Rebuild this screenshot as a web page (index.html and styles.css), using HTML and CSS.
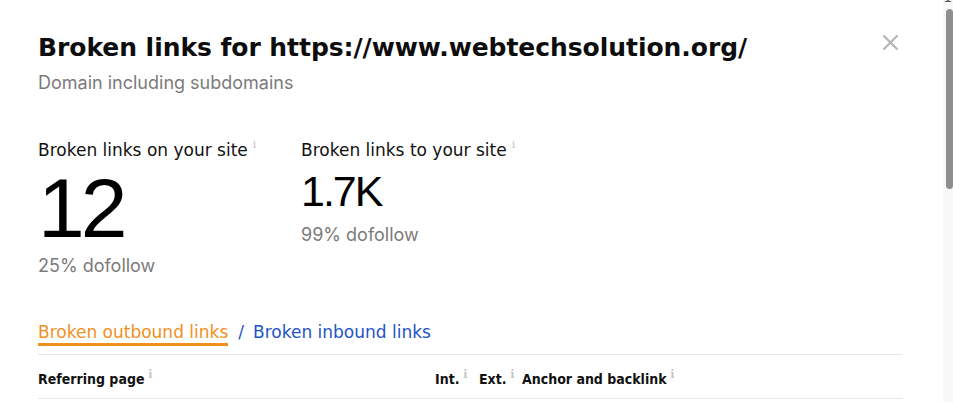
FILE: index.html
```html
<!DOCTYPE html>
<html lang="en">
<head>
<meta charset="utf-8">
<title>Broken links</title>
<link rel="stylesheet" href="styles.css">
</head>
<body>
<main class="panel">
  <header class="head">
    <div class="head-text">
      <h1 class="title">Broken links for https://www.webtechsolution.org/</h1>
      <p class="subtitle">Domain including subdomains</p>
    </div>
    <button class="close" aria-label="Close">
      <svg width="17" height="17" viewBox="0 0 17 17"><path d="M1.5 1.5 L15.5 15.5 M15.5 1.5 L1.5 15.5" stroke="#b4b4b4" stroke-width="2.2" fill="none"/></svg>
    </button>
  </header>

  <section class="stats">
    <div class="stat stat-on">
      <div class="stat-label">Broken links on your site<span class="info">i</span></div>
      <div class="stat-big">12</div>
      <div class="stat-sub stat-sub-big">25% dofollow</div>
    </div>
    <div class="stat stat-to">
      <div class="stat-label">Broken links to your site<span class="info">i</span></div>
      <div class="stat-mid">1.7K</div>
      <div class="stat-sub stat-sub-mid">99% dofollow</div>
    </div>
  </section>

  <nav class="tabs">
    <span class="tab tab-active">Broken outbound links</span><span class="tab-sep">/</span><span class="tab tab-link">Broken inbound links</span>
  </nav>

  <div class="table-head">
    <div class="th th-page">Referring page<span class="info">i</span></div>
    <div class="th th-int">Int.<span class="info">i</span></div>
    <div class="th th-ext">Ext.<span class="info">i</span></div>
    <div class="th th-anchor">Anchor and backlink<span class="info">i</span></div>
  </div>
</main>
<aside class="scrollbar">
  <div class="scroll-arrow"></div>
  <div class="scroll-thumb"></div>
</aside>
</body>
</html>
```

FILE: styles.css
```css
html, body {
  margin: 0;
  padding: 0;
  background: #fff;
}
body {
  display: flex;
  height: 402px;
  overflow: hidden;
  font-family: "DejaVu Sans", sans-serif;
  color: #111;
}
.panel {
  flex: 1;
  padding: 0 40px 0 38px;
  min-width: 0;
}
.head {
  display: flex;
  justify-content: space-between;
  align-items: flex-start;
  padding-top: 33px;
}
.title {
  margin: 0;
  font-family: "DejaVu Sans", sans-serif;
  font-weight: bold;
  font-size: 25px;
  line-height: 30px;
  color: #0d0d0d;
  letter-spacing: -0.05px;
}
.subtitle {
  margin: 9px 0 0;
  font-family: "Inter", sans-serif;
  font-size: 18px;
  line-height: 22px;
  color: #7b7b7b;
}
.close {
  margin: 1px 4px 0 0;
  padding: 0;
  border: 0;
  background: none;
  width: 17px;
  height: 17px;
  display: block;
}
.close svg { display: block; }

.stats {
  display: flex;
  align-items: flex-start;
  margin-top: 46px;
}
.stat-on { width: 263px; }
.stat-label {
  font-size: 17px;
  line-height: 20px;
  color: #111;
  white-space: nowrap;
}
.info {
  font-family: "DejaVu Serif", serif;
  font-size: 11px;
  line-height: 11px;
  color: #c2c2c2;
  vertical-align: top;
  margin-left: 5px;
  position: relative;
  top: -1px;
}
.stat-big {
  margin-top: 6px;
  font-family: "Liberation Sans", sans-serif;
  font-size: 84px;
  line-height: 84px;
  letter-spacing: -4px;
  color: #000;
}
.stat-mid {
  margin-top: 9px;
  font-family: "Liberation Sans", sans-serif;
  font-size: 43px;
  line-height: 44px;
  letter-spacing: -2px;
  color: #000;
}
.stat-sub {
  font-family: "Inter", sans-serif;
  font-size: 18px;
  line-height: 22px;
  color: #7b7b7b;
}
.stat-sub-big { margin-top: 5px; }
.stat-sub-mid { margin-top: 11px; }

.tabs {
  margin-top: 45px;
  font-size: 17px;
  line-height: 20px;
  display: flex;
  align-items: flex-start;
  padding-bottom: 8px;
  border-bottom: 1px solid #e6e6e6;
}
.tab-active {
  color: #f0901e;
  padding-bottom: 1px;
  border-bottom: 3px solid #f0901e;
}
.tab-sep {
  color: #1e55c4;
  margin: 0 9px 0 10px;
}
.tab-link {
  color: #1e55c4;
}

.table-head {
  display: grid;
  grid-template-columns: 397px 44px 43px 1fr;
  padding: 16px 0 11px;
  border-bottom: 1px solid #e6e6e6;
}
.th {
  font-family: "DejaVu Sans Condensed", "DejaVu Sans", sans-serif;
  font-stretch: condensed;
  font-weight: bold;
  font-size: 14px;
  line-height: 16px;
  color: #111;
  white-space: nowrap;
}
.th .info { margin-left: 4px; top: -2px; }

.scrollbar {
  width: 10px;
  flex: none;
  background: #f8f8f8;
}
.scroll-arrow {
  width: 0;
  height: 0;
  margin: 0 auto;
  border-left: 4px solid transparent;
  border-right: 4px solid transparent;
  border-bottom: 2px solid #505050;
}
.scroll-thumb {
  margin: 7px 0 0 3px;
  width: 7px;
  height: 180px;
  border-radius: 4px;
  background: #8f8f8f;
}
```
